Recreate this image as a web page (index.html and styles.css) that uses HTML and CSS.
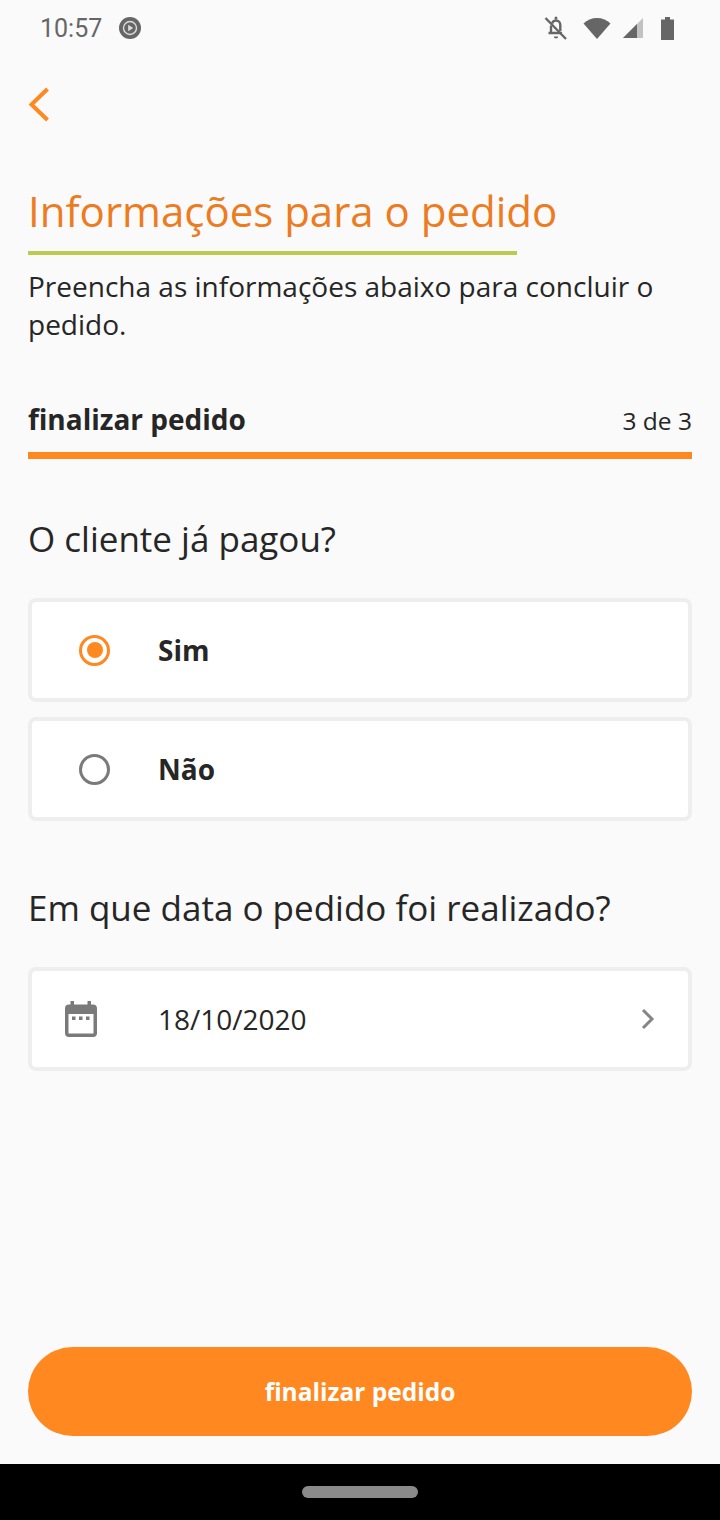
FILE: index.html
```html
<!DOCTYPE html>
<html lang="pt">
<head>
    <meta charset="UTF-8">
    <meta name="viewport" content="width=device-width, initial-scale=1.0">
    <title>Informações para o pedido</title>
    <link rel="stylesheet" href="styles.css">
</head>
<body>
    <div class="screen">
        <header class="status-bar">
            <div class="status-left">
                <span class="clock">10:57</span>
                <svg class="status-play" width="22" height="22" viewBox="0 0 22 22">
                    <circle cx="11" cy="11" r="11" fill="#666"/>
                    <circle cx="11" cy="11" r="6.5" fill="none" stroke="#ddd" stroke-width="1.4"/>
                    <path d="M9.2 7.8 14.2 11l-5 3.2z" fill="#ddd"/>
                </svg>
            </div>
            <div class="status-right">
                <svg width="24" height="26" viewBox="0 0 24 26">
                    <path d="M8 8.500C8.600 6.700 10.100 5.500 12 5.500c2.500 0 4.300 2 4.300 4.500v6" fill="none" stroke="#666" stroke-width="2.400"/>
                    <path d="M7 10.500V18H4.500M7 18h11" fill="none" stroke="#666" stroke-width="2.400"/>
                    <rect x="10.500" y="1.500" width="3" height="3" rx="1.500" fill="#666"/>
                    <path d="M9.800 21.500h4.400a2.200 2 0 0 1-4.400 0z" fill="#666"/>
                    <path d="M1.500 3 22 24" stroke="#666" stroke-width="2.400"/>
                </svg>
                <svg class="status-wifi" width="28" height="24" viewBox="0 0 28 24">
                    <path d="M0.500 7.500C4 4 8.800 2 14 2s10 2 13.500 5.500L14 23z" fill="#666"/>
                </svg>
                <svg class="status-signal" width="21" height="22" viewBox="0 0 21 22">
                    <path d="M0 21 20 1v20z" fill="#c2c2c2"/>
                    <path d="M0 21 14 7v14z" fill="#666"/>
                </svg>
                <svg class="status-battery" width="13" height="23" viewBox="0 0 13 23">
                    <path d="M4 0h5v2.500h4V23H0V2.500h4z" fill="#666"/>
                </svg>
            </div>
        </header>

        <main class="content">
            <button class="back-btn" aria-label="Voltar">
                <svg width="24" height="36" viewBox="0 0 24 36">
                    <path d="M19.500 3 3.500 18.500 19.500 34" fill="none" stroke="#ff8820" stroke-width="4"/>
                </svg>
            </button>

            <h1 class="page-title">Informações para o pedido</h1>
            <div class="title-line"></div>
            <p class="page-desc">Preencha as informações abaixo para concluir o pedido.</p>

            <div class="step-row">
                <span class="step-name">finalizar pedido</span>
                <span class="step-count">3 de 3</span>
            </div>
            <div class="step-bar"></div>

            <h2 class="question first">O cliente já pagou?</h2>
            <div class="card option">
                <span class="radio checked"></span>
                <span class="option-label">Sim</span>
            </div>
            <div class="card option">
                <span class="radio"></span>
                <span class="option-label">Não</span>
            </div>

            <h2 class="question second">Em que data o pedido foi realizado?</h2>
            <div class="card date-card">
                <svg class="date-icon" width="32" height="36" viewBox="0 0 32 36">
                    <path fill-rule="evenodd" d="M5.500 0h3.500v3.500h13.500V0H26v3.500h2a4 4 0 0 1 4 4V32a4 4 0 0 1-4 4H4a4 4 0 0 1-4-4V7.500a4 4 0 0 1 4-4h1.500zM3.500 13v19.500h25V13z" fill="#7a7a7a"/>
                    <rect x="7" y="15.500" width="3.500" height="3.500" fill="#7a7a7a"/>
                    <rect x="14" y="15.500" width="3.500" height="3.500" fill="#7a7a7a"/>
                    <rect x="21" y="15.500" width="3.500" height="3.500" fill="#7a7a7a"/>
                </svg>
                <span class="date-value">18/10/2020</span>
                <svg class="date-arrow" width="14" height="22" viewBox="0 0 14 22">
                    <path d="M2 2 11 11 2 20" fill="none" stroke="#858585" stroke-width="3"/>
                </svg>
            </div>

            <button class="submit-btn">finalizar pedido</button>
        </main>

        <footer class="nav-bar">
            <span class="nav-pill"></span>
        </footer>
    </div>
</body>
</html>
```

FILE: styles.css
```css
* {
    box-sizing: border-box;
}

body {
    margin: 0;
    padding: 0;
    background-color: #fafafa;
    color: #262626;
    font-family: 'Open Sans', sans-serif;
}

.screen {
    width: 720px;
    height: 1520px;
    display: flex;
    flex-direction: column;
    overflow: hidden;
}

.status-bar {
    height: 56px;
    padding: 0 40px;
    display: flex;
    justify-content: space-between;
    align-items: center;
    flex-shrink: 0;
}

.status-left {
    display: flex;
    align-items: center;
    gap: 17px;
}

.clock {
    font-family: Roboto, sans-serif;
    font-size: 25px;
    color: #666;
}

.status-right {
    display: flex;
    align-items: center;
    margin-right: 6px;
}

.status-wifi {
    margin-left: 15px;
}

.status-signal {
    margin-left: 12px;
}

.status-battery {
    margin-left: 17px;
}

.content {
    flex: 1;
    padding: 0 28px 28px;
    display: flex;
    flex-direction: column;
}

.back-btn {
    width: 24px;
    height: 36px;
    margin: 30px 0 0;
    padding: 0;
    background: none;
    border: none;
    flex-shrink: 0;
}

.back-btn svg {
    display: block;
}

.page-title {
    margin: 60px 0 0;
    font-size: 42px;
    line-height: 58px;
    font-weight: 400;
    color: #ec7c1f;
}

.title-line {
    width: 489px;
    height: 4px;
    margin-top: 11px;
    background-color: #b9cc4c;
}

.page-desc {
    margin: 12px 0 0;
    font-size: 28px;
    line-height: 38px;
}

.step-row {
    display: flex;
    justify-content: space-between;
    align-items: baseline;
    margin-top: 57px;
}

.step-name {
    font-size: 28px;
    line-height: 38px;
    font-weight: 700;
}

.step-count {
    font-size: 24.5px;
}

.step-bar {
    height: 7px;
    margin-top: 14px;
    background-color: #ff8820;
    flex-shrink: 0;
}

.question {
    margin: 0;
    font-size: 35px;
    line-height: 46px;
    font-weight: 400;
}

.question.first {
    margin-top: 57px;
    margin-bottom: 36px;
}

.question.second {
    margin-top: 64px;
    margin-bottom: 36px;
}

.card {
    height: 104px;
    display: flex;
    align-items: center;
    background-color: #fff;
    border: 4px solid #eee;
    border-radius: 8px;
    flex-shrink: 0;
}

.option + .option {
    margin-top: 15px;
}

.option {
    padding-left: 47px;
}

.radio {
    width: 31px;
    height: 31px;
    border: 3px solid #7a7a7a;
    border-radius: 50%;
    display: flex;
    align-items: center;
    justify-content: center;
}

.radio.checked {
    border-color: #ff8820;
}

.radio.checked::after {
    content: "";
    width: 16px;
    height: 16px;
    background-color: #ff8820;
    border-radius: 50%;
}

.option-label {
    margin-left: 48px;
    font-size: 28px;
    font-weight: 700;
}

.date-card {
    padding: 0 33px 0 33px;
}

.date-value {
    flex: 1;
    margin-left: 61px;
    font-size: 28px;
}

.submit-btn {
    height: 89px;
    margin-top: auto;
    width: 100%;
    background-color: #ff8820;
    color: #fff;
    border: none;
    border-radius: 45px;
    font-family: 'Open Sans', sans-serif;
    font-size: 24.5px;
    font-weight: 700;
    flex-shrink: 0;
}

.nav-bar {
    height: 56px;
    background-color: #000;
    display: flex;
    justify-content: center;
    align-items: center;
    flex-shrink: 0;
}

.nav-pill {
    width: 116px;
    height: 12px;
    background-color: #8a8a8a;
    border-radius: 6px;
}
```
